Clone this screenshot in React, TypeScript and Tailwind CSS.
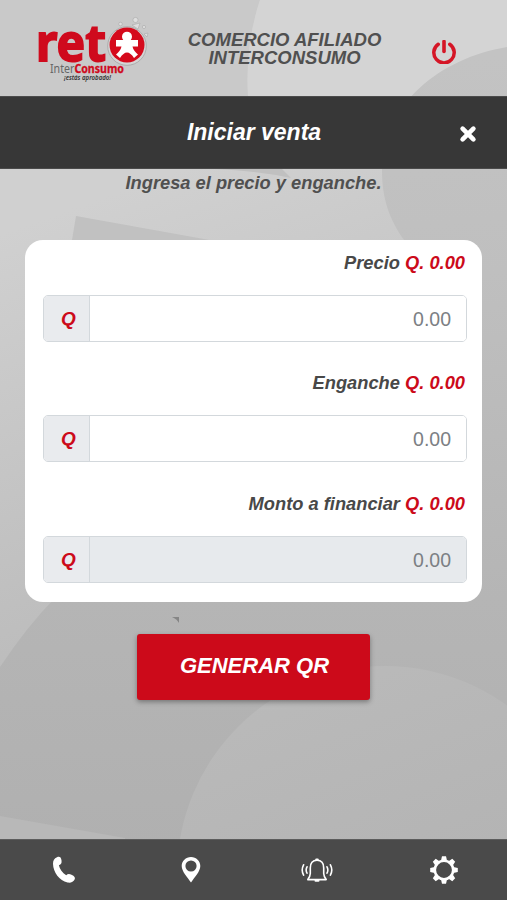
import { useState } from 'react';

interface AmountFieldProps {
  label: string;
  value: string;
  onChange?: (value: string) => void;
  disabled?: boolean;
}

function formatAmount(value: string): string {
  return (parseFloat(value) || 0).toFixed(2);
}

/** Decorative grey shapes drawn behind the whole screen */
function Backdrop() {
  return (
    <svg className="absolute inset-0 -z-10 h-full w-full" viewBox="0 0 507 900" preserveAspectRatio="none" aria-hidden="true">
      <defs>
        <linearGradient id="base" x1="0" y1="0" x2="0.2" y2="1">
          <stop offset="0" stopColor="#d0d0d0" />
          <stop offset="0.25" stopColor="#d0d0d0" />
          <stop offset="0.65" stopColor="#bfbfbf" />
          <stop offset="1" stopColor="#b2b2b2" />
        </linearGradient>
        <linearGradient id="side" gradientUnits="userSpaceOnUse" x1="440" y1="60" x2="480" y2="600">
          <stop offset="0" stopColor="#c3c3c3" />
          <stop offset="0.4" stopColor="#bfbfbf" />
          <stop offset="1" stopColor="#b5b5b5" />
        </linearGradient>
        <linearGradient id="dark" x1="0" y1="0" x2="0" y2="1">
          <stop offset="0" stopColor="#b5b5b5" />
          <stop offset="1" stopColor="#afafaf" />
        </linearGradient>
        <linearGradient id="light" x1="0" y1="0" x2="0.4" y2="1">
          <stop offset="0" stopColor="#bbbbbb" />
          <stop offset="1" stopColor="#b0b0b0" />
        </linearGradient>
      </defs>
      <rect width="507" height="900" fill="url(#base)" />
      <path d="M0 0H260Q245 45 248 96H0Z" fill="#c9c9c9" />
      <path d="M507 0H260Q245 45 248 96H507Z" fill="#d4d4d4" />
      <path d="M215 169H282L291 178Q258 171 215 169Z" fill="#c0c0c0" />
      <path d="M507 47C440 58 382 105 382 170C382 200 390 220 404 240V620H507Z" fill="url(#side)" />
      <path d="M76 216L215 241L225 300H62Z" fill="#c1c1c1" />
      <path d="M0 667Q28 625 55 598H507V900H0Z" fill="url(#dark)" />
      <circle cx="385" cy="874" r="208" fill="url(#light)" />
      <path d="M0 816L125 838V850H0Z" fill="#b8b8b8" />
    </svg>
  );
}

function Logo() {
  return (
    <svg className="h-[72px] w-[116px] shrink-0 overflow-visible" viewBox="0 0 116 72" role="img" aria-label="reto InterConsumo">
      <g fontFamily="'Noto Sans', 'Open Sans', sans-serif">
        <text x="-1" y="46" fontSize="51" fontWeight="700" fill="#cf0a1d" stroke="#cf0a1d" strokeWidth="1.800" textLength="70" lengthAdjust="spacingAndGlyphs">ret</text>
        <circle cx="90" cy="31" r="19.300" fill="#d5d5d5" stroke="#a3a3a3" strokeWidth="0.8" />
        <circle cx="90" cy="30" r="17.500" fill="#d50a1c" />
        <g fill="#dedede" stroke="#aaa" strokeWidth="0.6">
          <circle cx="98.500" cy="5" r="2.600" />
          <circle cx="83.500" cy="9" r="1.800" />
          <circle cx="107" cy="12" r="1.600" />
          <path d="M95 10L103 8L101 14Z" />
          <path d="M107 19L111 18L110 22Z" />
        </g>
        <path
          d="M86.200 25A5 5 0 1 1 93.800 25H101V31.500H95.500Q96.300 35.500 101 39.500L97 43Q93.500 37.500 90 37.500Q86.500 37.500 83 43L79 39.500Q83.700 35.500 84.500 31.500H79V25Z"
          fill="#fff"
        />
        <text x="13" y="57.500" fontSize="12" fill="#666" textLength="74" lengthAdjust="spacingAndGlyphs">
          Inter<tspan fontWeight="700" fill="#cf0a1d" stroke="#cf0a1d" strokeWidth="0.3">Consumo</tspan>
        </text>
        <text x="27" y="64.500" fontSize="6.800" fontWeight="600" fontStyle="italic" fill="#333" textLength="47" lengthAdjust="spacingAndGlyphs">¡estás aprobado!</text>
      </g>
    </svg>
  );
}

function AmountField({ label, value, onChange, disabled = false }: AmountFieldProps) {
  return (
    <div>
      <label className="block pr-[2px] text-right text-[18.300px] leading-[22px] font-bold italic text-[#484848]">
        {label} <span className="text-[#cc0a1a]">Q. {formatAmount(value)}</span>
      </label>
      <div className="mt-[21px] flex h-[47px] overflow-hidden rounded-[5px] border border-[#d3d8dc]">
        <span className="flex w-[46px] shrink-0 items-center justify-center border-r border-[#d3d8dc] bg-[#e9ebee] pt-px pl-1 text-[19px] font-bold italic text-[#cc0a1a]">
          Q
        </span>
        <input
          className="w-full min-w-0 bg-white pt-[2px] pr-[15px] text-right text-[19.500px] text-[#6c757d] placeholder:text-[#7c8084] disabled:bg-[#e7eaed]"
          type="text"
          inputMode="decimal"
          placeholder="0.00"
          aria-label={label}
          value={value}
          disabled={disabled}
          onChange={(e) => onChange?.(e.target.value)}
        />
      </div>
    </div>
  );
}

function PowerIcon() {
  return (
    <svg className="h-6 w-6" viewBox="0 0 24 24" fill="none" stroke="#d51626" strokeLinecap="round">
      <path d="M6.200 4.300A10.200 10.200 0 1 0 17.800 4.300" strokeWidth="3.500" />
      <path d="M12 1.500V11.500" strokeWidth="3.600" />
    </svg>
  );
}

function PhoneIcon() {
  return (
    <svg className="h-7 w-7" viewBox="0 0 28 28" fill="#fff">
      <path d="M7 1.200C9.600.2 11 1.200 11.500 4.200C11.900 7.300 11.200 8.300 8.900 9.300C9.600 13 12.400 17 16.200 19.300C17.700 17.700 19.200 17.500 21.500 18.700C24.500 20.200 25.600 21.400 24.600 23.500C23.500 25.900 20.800 27.100 17.500 26.500C9.500 24.800 3.200 16.300 3 7.800C3 4.400 4.200 2.200 7 1.200Z" />
    </svg>
  );
}

function PinIcon() {
  return (
    <svg className="h-7 w-7" viewBox="0 0 28 28" fill="#fff" fillRule="evenodd">
      <path d="M14 1C8.800 1 4.700 5 4.700 10C4.700 15.500 10.200 20.800 14 26.500C17.800 20.800 23.300 15.500 23.300 10C23.300 5 19.200 1 14 1ZM14 4.400A5.600 5.600 0 1 1 14 15.600A5.600 5.600 0 0 1 14 4.400Z" />
    </svg>
  );
}

function BellIcon() {
  return (
    <svg className="h-7 w-8" viewBox="0 0 32 28" fill="none" stroke="#fff" strokeWidth="1.600" strokeLinecap="round">
      <path d="M16 4.300C11.500 4.300 9.300 7.400 9.300 12V17.500Q9.200 20.500 6.800 23.600H25.200Q22.800 20.500 22.700 17.500V12C22.700 7.400 20.500 4.300 16 4.300Z" strokeLinejoin="round" />
      <path d="M15.300 3.500H16.700" strokeWidth="2.200" />
      <path d="M14.500 24.700H17.500" strokeWidth="2" />
      <path d="M6 10.800Q4.300 14 6 17.200M2.600 8.800Q-0.200 14 2.600 19.200M26 10.800Q27.700 14 26 17.200M29.400 8.800Q32.200 14 29.400 19.200" />
    </svg>
  );
}

function GearIcon() {
  const angles = [0, 45, 90, 135, 180, 225, 270, 315];

  return (
    <svg className="h-7 w-7" viewBox="0 0 28 28" fill="none">
      <circle cx="14" cy="14" r="9.200" stroke="#fff" strokeWidth="2.600" />
      {angles.map((angle) => (
        <path key={angle} d="M11 4.600L12 0.200H16L17 4.600Z" fill="#fff" transform={`rotate(${angle} 14 14)`} />
      ))}
    </svg>
  );
}

const navItems = [
  { label: 'Llamar', icon: PhoneIcon },
  { label: 'Ubicaciones', icon: PinIcon },
  { label: 'Notificaciones', icon: BellIcon },
  { label: 'Ajustes', icon: GearIcon },
];

export default function App() {
  const [price, setPrice] = useState('');
  const [downPayment, setDownPayment] = useState('');

  const financed = Number(price) - Number(downPayment);

  return (
    <div className="relative isolate flex h-[900px] w-full flex-col overflow-hidden font-['Liberation_Sans',Arial,sans-serif]">
      <Backdrop />

      <header className="flex h-24 shrink-0 items-start pt-[15px] pl-[37px]">
        <Logo />
        <h1 className="mt-4 ml-[19px] w-[225px] text-center text-[18.500px] leading-[18px] font-bold italic text-[#505050]">
          COMERCIO AFILIADO
          <br />
          INTERCONSUMO
        </h1>
        <button type="button" className="mt-[25px] ml-[35px]" aria-label="Salir">
          <PowerIcon />
        </button>
      </header>

      {/* Section title */}
      <div className="grid h-[73px] shrink-0 grid-cols-[1fr_auto_1fr] items-center border-y border-[#4b4b4b] bg-[#373737] text-white">
        <h2 className="col-start-2 -mt-[2px] pl-px text-[23px] leading-7 font-bold italic">Iniciar venta</h2>
        <button type="button" className="mt-[3px] mr-[29px] justify-self-end" aria-label="Cerrar">
          <svg className="h-5 w-5" viewBox="0 0 20 20" stroke="#fff" strokeWidth="4.600" strokeLinecap="round">
            <path d="M4.600 4.600L15.400 15.400M15.400 4.600L4.600 15.400" />
          </svg>
        </button>
      </div>

      <main className="flex flex-1 flex-col items-center">
        <p className="mt-[3px] text-[18.300px] leading-[22px] font-bold italic text-[#505050]">Ingresa el precio y enganche.</p>

        <div className="mt-[46px] flex h-[362px] w-[457px] flex-col gap-[30.400px] rounded-[18px] bg-white px-[15px] pt-3 pl-[18px]">
          <AmountField label="Precio" value={price} onChange={setPrice} />
          <AmountField label="Enganche" value={downPayment} onChange={setDownPayment} />
          <AmountField label="Monto a financiar" value={financed ? financed.toFixed(2) : ''} disabled />
        </div>

        <div className="flex h-8 w-full items-center pt-[3px] pl-[172px]">
          <svg className="h-[6px] w-[7px]" viewBox="0 0 7 6">
            <path d="M0 0H7V6Q5 2 0 0Z" fill="#858585" />
          </svg>
        </div>

        <button
          type="button"
          className="h-[66px] w-[233px] rounded-[3px] bg-[#cc0a1a] pb-[3px] pl-[2px] text-[22px] font-bold italic text-white shadow-[0_2px_5px_rgba(0,0,0,0.35)]"
        >
          GENERAR QR
        </button>
      </main>

      <nav className="grid h-[61px] shrink-0 grid-cols-4 border-t border-[#5c5c5c] bg-[#4a4a4a] pl-px">
        {navItems.map(({ label, icon: Icon }) => (
          <button key={label} type="button" className="flex items-center justify-center" aria-label={label}>
            <Icon />
          </button>
        ))}
      </nav>
    </div>
  );
}
